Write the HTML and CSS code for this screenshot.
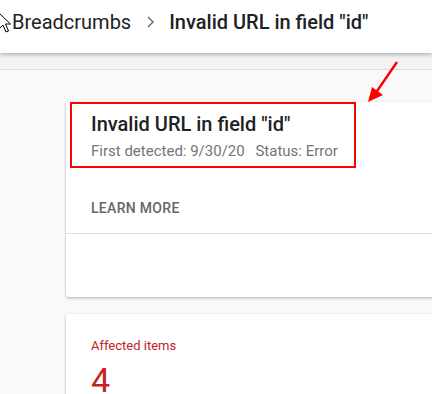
FILE: index.html
```html
<!DOCTYPE html>
<html lang="en">
<head>
  <meta charset="UTF-8">
  <title>Invalid URL in field "id"</title>
  <link rel="stylesheet" href="styles.css">
</head>
<body>
  <div class="topbar">
    <span class="crumb">Breadcrumbs</span>
    <span class="chevron">
      <svg width="10" height="14" viewBox="0 0 10 14"><path d="M2 2 L7 7 L2 12" fill="none" stroke="#5f6368" stroke-width="1.4"/></svg>
    </span>
    <span class="crumb-current">Invalid URL in field "id"</span>
  </div>
  <div class="strip"></div>

  <div class="content">
    <div class="card">
      <div class="highlight">
        <h1>Invalid URL in field "id"</h1>
        <p class="meta">First detected: 9/30/20 <span class="status">Status: Error</span></p>
      </div>
      <div class="actions">
        <span class="learn">LEARN MORE</span>
      </div>
      <div class="card-footer"></div>
    </div>

    <div class="card stats">
      <div class="stats-label">Affected items</div>
      <div class="stats-value">4</div>
    </div>
  </div>

  <!-- annotation arrow -->
  <svg class="pointer-arrow" width="40" height="50" viewBox="0 0 40 50">
    <line x1="33" y1="2" x2="11" y2="34" stroke="#f00" stroke-width="2.4"/>
    <polygon points="4,42 8,27 19,35" fill="#f00"/>
  </svg>

  <!-- mouse cursor -->
  <svg class="cursor" width="14" height="22" viewBox="0 0 14 22">
    <path d="M1 1 L1 17 L5 13 L8 20 L10.5 19 L7.5 12 L12.5 12 Z" fill="#fff" stroke="#000" stroke-width="1"/>
  </svg>
</body>
</html>
```

FILE: styles.css
```css
* {
  margin: 0;
  padding: 0;
  box-sizing: border-box;
}
body {
  font-family: Roboto, "Noto Sans", Arial, sans-serif;
  background: #f9f9f9;
  width: 432px;
  height: 394px;
  overflow: hidden;
  position: relative;
}
.topbar {
  height: 53px;
  background: #fff;
  display: flex;
  align-items: center;
  padding-left: 12px;
  padding-bottom: 10px;
  box-shadow: 0 1px 5px rgba(0, 0, 0, 0.35);
  position: relative;
  z-index: 1;
  white-space: nowrap;
}
.crumb {
  font-size: 20px;
  color: #202124;
}
.chevron {
  display: flex;
  margin: 0 13px 0 15px;
}
.crumb-current {
  font-size: 20px;
  font-weight: 500;
  color: #202124;
}
.strip {
  height: 17px;
  background: #f3f3f3;
  border-bottom: 1px solid #dcdcdc;
}
.content {
  padding: 26px 0 0 66px;
  width: 520px;
}
.card {
  background: #fff;
  box-shadow: 0 1px 3px rgba(0, 0, 0, 0.3);
  border-radius: 2px;
}
.highlight {
  margin: 6px 0 0 4px;
  width: 286px;
  height: 66px;
  border: 2px solid #f00;
  padding: 8px 0 0 19px;
}
.highlight h1 {
  font-size: 20px;
  font-weight: 500;
  color: #202124;
  line-height: 24px;
}
.meta {
  font-size: 15px;
  color: #757575;
  margin-top: 6px;
  line-height: 18px;
}
.status {
  margin-left: 7px;
}
.actions {
  height: 66px;
  padding: 30px 0 0 25px;
  border-bottom: 1px solid #e0e0e0;
}
.learn {
  font-size: 14px;
  font-weight: 500;
  color: #666;
  letter-spacing: 0.3px;
}
.card-footer {
  height: 63px;
}
.stats {
  margin-top: 17px;
  padding: 24px 0 0 25px;
  height: 120px;
}
.stats-label {
  font-size: 13px;
  color: #c5221f;
}
.stats-value {
  font-size: 34px;
  color: #c5221f;
  margin-top: 7px;
}
.pointer-arrow {
  position: absolute;
  left: 364px;
  top: 60px;
}
.cursor {
  position: absolute;
  left: -2px;
  top: 12px;
  z-index: 2;
}
```
